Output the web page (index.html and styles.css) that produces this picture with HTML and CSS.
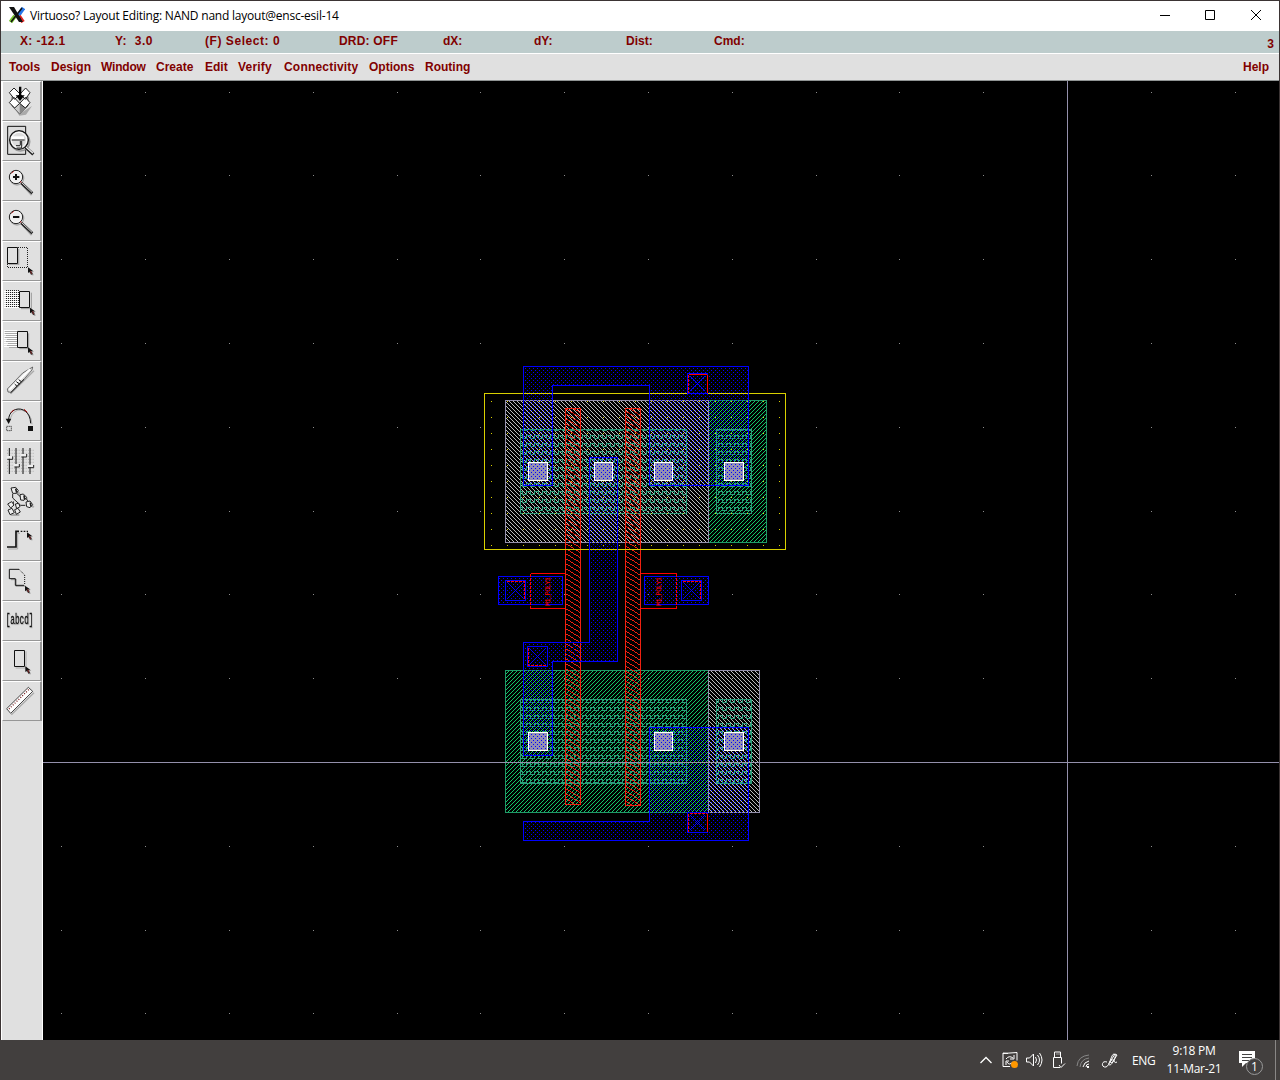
FILE: index.html
```html
<!DOCTYPE html>
<html lang="en">
<head>
<meta charset="utf-8">
<title>Virtuoso Layout Editing</title>
<link rel="stylesheet" href="styles.css">
</head>
<body>
<svg class="defs" width="0" height="0" aria-hidden="true">
  <defs>
    <g id="cursor"><path d="M3 3V18L7 15L12 24H17L13 14L18 13Z" fill="#999"/><path d="M0 0V17L5 13L9 22L14 20L9 11H15Z" fill="#111"/><path d="M6 12h3v6h3" fill="none" stroke="#a33" stroke-width="2"/></g>
    <g id="lens"><path d="M68 75L95 105" stroke="#aaa" stroke-width="6"/><circle cx="51" cy="55" r="20" fill="none" stroke="#aaa" stroke-width="4"/><circle cx="48" cy="51" r="20" fill="#e8e8e8" stroke="#222" stroke-width="3"/><path d="M34 40L42 34M61 64L66 70" stroke="#a00" stroke-width="3"/><circle cx="48" cy="51" r="16" fill="#eee" stroke="#fff" stroke-width="2"/><path d="M64 69L97 100" stroke="#222" stroke-width="8"/><path d="M65 68L96 97" stroke="#ddd" stroke-width="3"/></g>
  </defs>
</svg>
<div class="window">
  <header class="titlebar">
    <svg class="logo" viewBox="0 0 16 16"><path d="M9.500 8L14.500 1" stroke="#2676e8" stroke-width="4"/><path d="M1.500 15L6 9" stroke="#75c52c" stroke-width="4"/><path d="M10 9L14 15" stroke="#df2420" stroke-width="4"/><path d="M0 0H5L14 15H10Z" fill="#111"/><path d="M13 1L2 15" stroke="#111" stroke-width="1.500"/></svg>
    <span class="title">Virtuoso? Layout Editing: NAND nand layout@ensc-esil-14</span>
    <svg class="controls" viewBox="0 0 100 12"><path d="M0 6.500H10M45.500 1.500h9v9h-9zM91 1L101 11M101 1L91 11" fill="none" stroke="#000"/></svg>
  </header>
  <div class="status">
    <span class="f1">X: -12.1</span><span class="f2">Y:&nbsp; 3.0</span><span class="f3">(F) Select: 0</span><span class="f4">DRD: OFF</span><span class="f5">dX:</span><span class="f6">dY:</span><span class="f7">Dist:</span><span class="f8">Cmd:</span><span class="count">3</span>
  </div>
  <nav class="menu"><span class="m1">Tools</span><span class="m2">Design</span><span class="m3">Window</span><span class="m4">Create</span><span class="m5">Edit</span><span class="m6">Verify</span><span class="m7">Connectivity</span><span class="m8">Options</span><span class="m9">Routing</span><span class="help">Help</span></nav>
  <main class="work">
    <aside class="tools">
      <div class="tool"><svg viewBox="9 6 111 114"><path d="M40 78L62 99L96 78L78 104L58 107Z" fill="#aaa"/><path d="M36 50L58 70L84 50V78L59 102L36 78Z" fill="#ccc" stroke="#333" stroke-width="2"/><path d="M59 70V102L84 78V50Z" fill="#888"/><path d="M28 38L42 24L60 42L44 58ZM60 42L77 24L90 38L76 58ZM28 68L42 52L59 70L44 84ZM59 70L76 52L90 68L76 84Z" fill="#fff" stroke="#222" stroke-width="3"/><path d="M57 20h7v26h10L60 63L47 46h10Z" fill="#000"/></svg></div>
      <div class="tool"><svg viewBox="9 6 111 114"><path d="M23 19H77V103H23Z" fill="#ddd" stroke="#111" stroke-width="3"/><circle cx="61" cy="65" r="28" fill="none" stroke="#999" stroke-width="5"/><circle cx="57" cy="60" r="28" fill="#e5e5e5" stroke="#111" stroke-width="4"/><circle cx="57" cy="60" r="23" fill="#ddd" stroke="#fff" stroke-width="3"/><path d="M35 49H72V58H35Z" fill="#fff"/><path d="M35 60H74M61 63V76M48 77H60M65 63V84H50" fill="none" stroke="#222" stroke-width="3"/><path d="M77 82L100 103" stroke="#222" stroke-width="9"/><path d="M78 81L99 100" stroke="#eee" stroke-width="4"/></svg></div>
      <div class="tool"><svg viewBox="9 6 111 114"><use href="#lens"/><path d="M39 51H58M48 42V60" stroke="#111" stroke-width="6"/></svg></div>
      <div class="tool"><svg viewBox="9 6 111 114"><use href="#lens"/><path d="M39 51H58" stroke="#111" stroke-width="6"/></svg></div>
      <div class="tool"><svg viewBox="9 6 111 114"><path d="M27 73H56V27" fill="none" stroke="#aaa" stroke-width="4"/><path d="M55 22.500H82.500V82.500H22.500V72" fill="none" stroke="#222" stroke-width="3" stroke-dasharray="3" shape-rendering="crispEdges"/><path d="M22.500 22.500H52.500V70.500H22.500Z" fill="#e0e0e0" stroke="#111" stroke-width="3"/><use href="#cursor" x="84" y="82"/></svg></div>
      <div class="tool"><svg viewBox="9 6 111 114"><g shape-rendering="crispEdges"><path d="M12 34.500H56M12 40.500H56M12 46.500H56M12 52.500H56M12 58.500H56M12 64.500H56M12 70.500H56M12 76.500H56M12 82.500H56" stroke="#fff" stroke-width="3"/><path d="M18 31.500H57M18 37.500H57M18 43.500H57M18 49.500H57M18 55.500H57M18 61.500H57M18 67.500H57M18 73.500H57M18 79.500H57" stroke="#222" stroke-width="3" stroke-dasharray="3"/></g><path d="M63 86H94V38" fill="none" stroke="#999" stroke-width="3"/><path d="M58.500 34.500H88.500V82.500H58.500Z" fill="#e0e0e0" stroke="#111" stroke-width="3"/><use href="#cursor" x="90" y="83"/></svg></div>
      <div class="tool"><svg viewBox="9 6 111 114"><g shape-rendering="crispEdges"><path d="M12 31.500H51M12 37.500H51M12 43.500H51M12 49.500H51M12 55.500H51M12 61.500H51M12 67.500H51M12 73.500H51M12 79.500H51" stroke="#fff" stroke-width="3"/><path d="M15 34.500H51M15 40.500H51M18 46.500H51M15 52.500H51M21 58.500H51M18 64.500H51M24 70.500H51M21 76.500H51M27 82.500H51" stroke="#aaa" stroke-width="3"/></g><path d="M58 86H86V40" fill="none" stroke="#999" stroke-width="3"/><path d="M52.500 34.500H82.500V82.500H52.500Z" fill="#e0e0e0" stroke="#111" stroke-width="3"/><use href="#cursor" x="84" y="82"/></svg></div>
      <div class="tool"><svg viewBox="9 6 111 114"><path d="M32 101L102 32" stroke="#aaa" stroke-width="4"/><path d="M22 87L68 39L98 21L96 30L72 58L34 97L24 96Z" fill="#ddd" stroke="#333" stroke-width="2"/><path d="M28 89L90 28" stroke="#fff" stroke-width="6"/><path d="M44 72L51 79M49 65L59 72M56 59L64 65" stroke="#111" stroke-width="3"/><path d="M32 98L72 58" stroke="#111" stroke-width="3"/></svg></div>
      <div class="tool"><svg viewBox="9 6 111 114"><path d="M31 56Q40 27 65 30Q94 37 96 73" fill="none" stroke="#aaa" stroke-width="3"/><path d="M26 59C27 16 90 13 92 70" fill="none" stroke="#111" stroke-width="3"/><path d="M33 38L42 29M72 28L82 37" stroke="#a00" stroke-width="3"/><path d="M17 56H34L26 72Z" fill="#111"/><path d="M84 78H99V93H84Z" fill="#111"/><path d="M20 79H34V92H20Z" fill="none" stroke="#111" stroke-width="3" stroke-dasharray="3"/></svg></div>
      <div class="tool"><svg viewBox="9 6 111 114"><path d="M21 31H105M21 40H105M21 49H105M21 58H105M21 67H105M21 76H105M21 85H105M21 94H105" stroke="#999" stroke-width="2" stroke-dasharray="3 4"/><path d="M28 24V102M48 24V102M69 24V102M90 24V102" stroke="#111" stroke-width="3"/><path d="M20 48H38V56H20ZM42 72H58V80H42ZM62 42H80V50H62ZM82 74H100V82H82Z" fill="#eee"/><path d="M22 58H38V49M43 81H58V72M64 51H80V42M84 83H101V75" fill="none" stroke="#222" stroke-width="3"/></svg></div>
      <div class="tool"><svg viewBox="9 6 111 114"><path d="M45 28L59 42M71 47L82 58M91 72L101 82M32 105H58" stroke="#aaa" stroke-width="6"/><path d="M38 42V54L62 76H76M49 39L63 52M76 53L84 63M40 76V64" fill="none" stroke="#222" stroke-width="3"/><g fill="#eee" stroke="#222" stroke-width="3"><path d="M33 24L47 22L55 32L49 40L38 40ZM60 44L70 42L80 52L72 61L62 60ZM78 66L90 63L98 74L90 83L80 80ZM23 72L35 65L42 75L32 84ZM46 72L56 70L60 80L50 86ZM24 90L36 85L43 98L30 104ZM44 89L54 85L61 96L49 103Z"/></g><path d="M47 26L50 38M72 46L74 59M91 68L93 80" stroke="#222" stroke-width="5"/></svg></div>
      <div class="tool"><svg viewBox="9 6 111 114"><path d="M24 87H53V40H60" fill="none" stroke="#aaa" stroke-width="3"/><path d="M21 81H48V34H57" fill="none" stroke="#111" stroke-width="5"/><path d="M62 34H84" stroke="#111" stroke-width="4" stroke-dasharray="5 4"/><use href="#cursor" x="81" y="37"/></svg></div>
      <div class="tool"><svg viewBox="9 6 111 114"><path d="M33 59H49V79H75" fill="none" stroke="#aaa" stroke-width="4"/><path d="M57 28H28V56H46V76H72" fill="none" stroke="#111" stroke-width="3"/><path d="M57 28L74 45V76" fill="none" stroke="#111" stroke-width="3" stroke-dasharray="3"/><use href="#cursor" x="75" y="77"/></svg></div>
      <div class="tool"><svg viewBox="9 6 111 114"><text class="label" transform="translate(17 71) scale(.54 1)">[abcd]</text></svg></div>
      <div class="tool"><svg viewBox="9 6 111 114"><path d="M47 84H78V34" fill="none" stroke="#aaa" stroke-width="3"/><path d="M43.500 31.500H73.500V79.500H43.500Z" fill="#e0e0e0" stroke="#111" stroke-width="3"/><use href="#cursor" x="76" y="79"/></svg></div>
      <div class="tool"><svg viewBox="9 6 111 114"><path d="M34 104L102 38" stroke="#aaa" stroke-width="4"/><path d="M20 86L85 22L98 34L32 100Z" fill="#fff" stroke="#222" stroke-width="2.500"/><path d="M27 87L88 27" stroke="#722" stroke-width="4" stroke-dasharray="3 5"/></svg></div>
    </aside>
    <svg class="canvas" viewBox="43 81 1236 959" shape-rendering="crispEdges">
      <defs>
        <pattern id="well" width="16" height="16" patternUnits="userSpaceOnUse"><path d="M11 1h1v1h-1z" fill="#d8d000"/></pattern>
        <pattern id="pplus" width="4" height="4" patternUnits="userSpaceOnUse"><path d="M0 0h1v1h-1zM1 1h1v1h-1zM2 2h1v1h-1zM3 3h1v1h-1z" fill="#bcbcbc"/></pattern>
        <pattern id="nplus" width="4" height="4" patternUnits="userSpaceOnUse"><path d="M3 0h1v1h-1zM2 1h1v1h-1zM1 2h1v1h-1zM0 3h1v1h-1z" fill="#10c868"/></pattern>
        <pattern id="active" width="8" height="8" patternUnits="userSpaceOnUse" patternTransform="translate(6 0)"><path d="M0 3h5v3h3v1h-4v-3h-3v3h-1z" fill="#2b9c7a"/></pattern>
        <pattern id="metal" width="4" height="4" patternUnits="userSpaceOnUse"><path d="M1 0h1v1h-1zM3 2h1v1h-1z" fill="#0000ff"/></pattern>
        <pattern id="poly" width="8" height="5" patternUnits="userSpaceOnUse"><path d="M0 0h2v1h-2zM2 1h1v1h-1zM3 2h2v1h-2zM5 3h1v1h-1zM6 4h2v1h-2z" fill="#f02010"/></pattern>
        <g id="contact"><path d="M.5.5h19v18H.5z" fill="#9490b4"/><path d="M.5.5h19v18H.5z" fill="url(#metal)" stroke="#fff"/></g>
        <g id="contact-narrow"><path d="M.5.5h18v18H.5z" fill="#9490b4"/><path d="M.5.5h18v18H.5z" fill="url(#metal)" stroke="#fff"/></g>
        <g id="via"><path d="M.5.5h20v20H.5z" fill="none" stroke="#00f"/><path d="M3 3L18 18M18 3L3 18" stroke="#00f"/></g>
        <g id="gridrow" fill="#8c8c8c"><path d="M61 0h1v1h-1zM145 0h1v1h-1zM229 0h1v1h-1zM313 0h1v1h-1zM397 0h1v1h-1zM480 0h1v1h-1zM564 0h1v1h-1zM648 0h1v1h-1zM732 0h1v1h-1zM816 0h1v1h-1zM899 0h1v1h-1zM983 0h1v1h-1zM1151 0h1v1h-1zM1235 0h1v1h-1z"/></g>
      </defs>
      <path d="M43 81h1236v959H43z"/>
      <use href="#gridrow" y="92"/><use href="#gridrow" y="175"/><use href="#gridrow" y="259"/><use href="#gridrow" y="343"/><use href="#gridrow" y="427"/><use href="#gridrow" y="511"/><use href="#gridrow" y="594"/><use href="#gridrow" y="678"/><use href="#gridrow" y="846"/><use href="#gridrow" y="930"/><use href="#gridrow" y="1013"/>
      <path d="M505.500 400.500h203v142h-203zM708.500 670.500h51v142h-51z" fill="url(#pplus)" stroke="#9490ac"/>
      <path d="M708.500 400.500h58v142h-58zM505.500 670.500h203v142h-203z" fill="url(#nplus)" stroke="#209a68"/>
      <path d="M708.500 400v143M708.500 670v143" stroke="#9490ac"/>
      <path d="M520.500 429.500h166v84h-166zM716.500 429.500h35v84h-35zM520.500 699.500h166v84h-166zM716.500 699.500h35v84h-35z" fill="url(#active)" stroke="#2b9c7a"/>
      <path d="M565.500 408.500h15v396h-15zM625.500 408.500h15v397h-15z" fill="url(#poly)" stroke="#f02010"/>
      <path d="M484.500 393.500h301v156h-301z" fill="url(#well)" stroke="#d8d000"/>
      <path d="M523.500 366.500h225v119h-99v-100h-97v100h-29zM589.500 457.500h28v204h-65v94h-29v-113h66zM649.500 727.500h99v113h-225v-19h126zM498.500 576.500h64v28h-64zM644.500 576.500h64v28h-64z" fill="url(#metal)" stroke="#00f"/>
      <path d="M524 393.500h28M650 393.500h98M590 549.500h27" stroke="#d8d000" stroke-dasharray="3 1"/>
      <use href="#contact" x="528" y="462"/><use href="#contact-narrow" x="594" y="462"/><use href="#contact-narrow" x="654" y="462"/><use href="#contact" x="724" y="462"/><use href="#contact" x="528" y="732"/><use href="#contact-narrow" x="654" y="732"/><use href="#contact" x="724" y="732"/>
      <use href="#via" x="687" y="373"/><use href="#via" x="687" y="812"/><use href="#via" x="505" y="580"/><use href="#via" x="681" y="580"/><use href="#via" x="527" y="646"/>
      <g fill="none" stroke="#f00"><path d="M565 573.500h-34.500M530.500 608.500h34.500M641 573.500h35.500M676.500 608.500h-35.500M689 374.500h18M707.500 375v18M707.500 814v18"/><path d="M530.500 574v35M676.500 574v35M688.500 375v18M688.500 814v18M690 813.500h17M507 581.500h17.500v18M683 581.500h17.500v18M528.500 648v17.500h18" stroke-dasharray="3 1"/></g>
      <text class="pin" transform="translate(550 606) rotate(-90)" textLength="29">M1_POLY1</text><text class="pin" transform="translate(661 606) rotate(-90)" textLength="29">M1_POLY1</text>
      <path d="M43 762.500h1236M1067.500 81v959" stroke="#9490ac"/>
    </svg>
  </main>
</div>
<footer class="taskbar">
  <svg class="tray" viewBox="975 1045 150 30" fill="none" stroke="#fff" stroke-width="1"><path d="M980.500 1063l5.500-5.500 5.500 5.500" stroke-width="1.300"/><path d="M1008 1053.500l-5-.5v13.500h7M1003 1053.500l14-1v8M1006 1059q3-4 7-1m1-3v4h-4m3 3q-4 4-6 0m-1 3v-4h3"/><circle cx="1014.500" cy="1064.500" r="3.500" fill="#ff9800" stroke="none"/><path d="M1026.500 1058h3l4-4v12l-4-4h-3zM1035.500 1057q2 3 0 6m2-8q4 5 0 10m2-12q5 7 0 14M1054.500 1057v-5h6v5M1060 1067.500h-6.500v-10h8v6M1056.500 1054h1m1 0h1M1059 1065l2 2.500 4-4"/><path d="M1077 1066q1-10 12-11M1080 1067q1-8 9-9" stroke="#888"/><path d="M1083 1067q1-5 6-6M1086 1067q0-3 3-3"/><path d="M1087 1066h2v2h-2z" fill="#fff" stroke="none"/><path d="M1107 1062c-6-2-6 6-1 5 4-1 5-13 8-13 4 0-2 11-4 11-3 0 1-6 3-5 3 0 0 4 4 2M1110 1062l5-8 2 1-5 8z"/></svg>
  <span class="lang">ENG</span>
  <div class="clock"><span>9:18 PM</span><span>11-Mar-21</span></div>
  <svg class="notice" viewBox="0 0 26 26"><path d="M0 1H16V13H7L3 17V13H0Z" fill="#fff"/><path d="M3 4.500H13M3 7.500H13M3 10.500H10" stroke="#444"/><circle cx="15.500" cy="16.500" r="8" fill="#424040" stroke="#999"/><text x="15.500" y="21" text-anchor="middle">1</text></svg>
  <i class="peek"></i>
</footer>
</body>
</html>
```
FILE: styles.css
```css
* { box-sizing: border-box; }
body { margin: 0; width: 1280px; height: 1080px; overflow: hidden; background: #3b3434; }
.defs { display: none; }
.window { height: 1040px; padding: 1px 1px 0; display: flex; flex-direction: column; background: #3b3434; }
.titlebar { height: 30px; display: flex; align-items: center; background: #fff; padding: 0 17px 2px 8px; font: 12px "Open Sans", sans-serif; color: #000; }
.logo { width: 16px; height: 16px; margin-right: 5px; }
.title { letter-spacing: -.22px; white-space: nowrap; }
.controls { width: 100px; height: 12px; margin-left: auto; margin-right: 2px; overflow: visible; }
.status { height: 22px; display: flex; background: #bdcccc; padding-left: 19px; font: bold 12px/20px "Liberation Sans", sans-serif; color: #800000; white-space: pre; }
.status span { flex: none; }
.f1 { width: 95px; letter-spacing: .35px; } .f2 { width: 90px; letter-spacing: .5px; } .f3 { width: 134px; letter-spacing: .55px; } .f4 { width: 104px; letter-spacing: .2px; }
.f5 { width: 91px; } .f6 { width: 92px; } .f7 { width: 88px; }
.status .count { margin-left: auto; padding: 3px 5px 0 0; }
.menu { height: 28px; display: flex; border-top: 1px solid #fff; border-bottom: 1px solid #909494; background: #e0e0e0; padding-left: 8px; font: bold 12px/26px "Liberation Sans", sans-serif; color: #800000; }
.m1 { width: 42px; } .m2 { width: 50px; } .m3 { width: 55px; letter-spacing: -.2px; } .m4 { width: 49px; }
.m5 { width: 33px; } .m6 { width: 46px; letter-spacing: .2px; } .m7 { width: 85px; letter-spacing: .2px; } .m8 { width: 56px; }
.help { margin-left: auto; padding-right: 10px; }
.work { flex: 1; display: flex; min-height: 0; }
.tools { width: 42px; flex: none; background: #e0e0e0; border-left: 1px solid #fff; border-right: 1px solid #fff; }
.tool { height: 40px; border: 1px solid #fff; border-right: 2px solid #969696; border-bottom-color: #969696; }
.tool svg { display: block; width: 37px; height: 38px; }
.label { font: 43px "Liberation Mono", monospace; fill: #111; stroke: #111; stroke-width: 1px; filter: drop-shadow(4px 3px 0 #bbb); }
.canvas { width: 1236px; height: 959px; flex: none; display: block; }
.pin { font: 7px "Liberation Mono", monospace; fill: #f00; }
.taskbar { height: 40px; display: flex; align-items: center; background: #423f3e; color: #fff; font: 12px "Open Sans", sans-serif; padding-left: 975px; }
.tray { width: 150px; height: 30px; }
.lang { width: 42px; padding-left: 7px; letter-spacing: -.3px; }
.clock { width: 54px; display: flex; flex-direction: column; align-items: center; line-height: 18px; letter-spacing: -.3px; white-space: nowrap; }
.notice { width: 26px; height: 26px; margin: 6px 0 0 18px; }
.notice text { font: 12px "Open Sans", sans-serif; fill: #fff; }
.peek { width: 1px; height: 40px; margin-left: auto; margin-right: 4px; background: #898786; }
```
